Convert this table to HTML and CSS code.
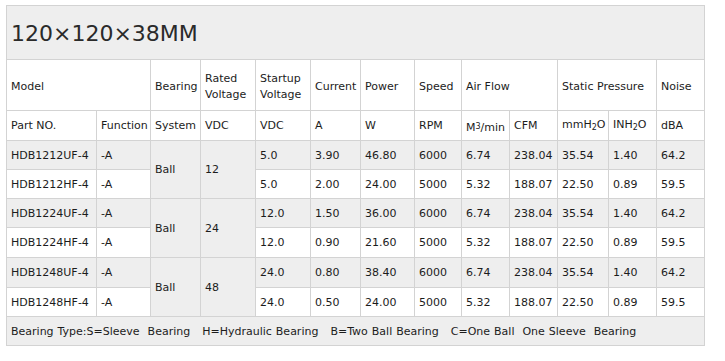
FILE: index.html
```html
<!DOCTYPE html>
<html>
<head>
<meta charset="utf-8">
<link rel="stylesheet" href="styles.css">
</head>
<body>
<table class="spec">
  <colgroup>
    <col class="c90"><col class="c54"><col class="c50"><col class="c55"><col class="c55"><col class="c50"><col class="c54"><col class="c47"><col class="c48"><col class="c48"><col class="c51"><col class="c48"><col class="c48">
  </colgroup>
  <tr class="title-row"><td colspan="13" class="title">120×120×38MM</td></tr>
  <tr class="head1">
    <td colspan="2">Model</td>
    <td>Bearing</td>
    <td>Rated<br>Voltage</td>
    <td>Startup<br>Voltage</td>
    <td>Current</td>
    <td>Power</td>
    <td>Speed</td>
    <td colspan="2">Air Flow</td>
    <td colspan="2">Static Pressure</td>
    <td>Noise</td>
  </tr>
  <tr class="head2">
    <td>Part NO.</td><td>Function</td><td>System</td><td>VDC</td><td>VDC</td><td>A</td><td>W</td><td>RPM</td>
    <td class="lowered">M<sup>3</sup>/min</td><td>CFM</td><td class="raised">mmH<sub>2</sub>O</td><td class="raised">INH<sub>2</sub>O</td><td>dBA</td>
  </tr>
  <tr class="row odd">
    <td>HDB1212UF-4</td><td>-A</td><td rowspan="2" class="merged">Ball</td><td rowspan="2" class="merged">12</td>
    <td>5.0</td><td>3.90</td><td>46.80</td><td>6000</td><td>6.74</td><td>238.04</td><td>35.54</td><td>1.40</td><td>64.2</td>
  </tr>
  <tr class="row">
    <td>HDB1212HF-4</td><td>-A</td>
    <td>5.0</td><td>2.00</td><td>24.00</td><td>5000</td><td>5.32</td><td>188.07</td><td>22.50</td><td>0.89</td><td>59.5</td>
  </tr>
  <tr class="row odd">
    <td>HDB1224UF-4</td><td>-A</td><td rowspan="2" class="merged">Ball</td><td rowspan="2" class="merged">24</td>
    <td>12.0</td><td>1.50</td><td>36.00</td><td>6000</td><td>6.74</td><td>238.04</td><td>35.54</td><td>1.40</td><td>64.2</td>
  </tr>
  <tr class="row tall">
    <td>HDB1224HF-4</td><td>-A</td>
    <td>12.0</td><td>0.90</td><td>21.60</td><td>5000</td><td>5.32</td><td>188.07</td><td>22.50</td><td>0.89</td><td>59.5</td>
  </tr>
  <tr class="row odd tall">
    <td>HDB1248UF-4</td><td>-A</td><td rowspan="2" class="merged">Ball</td><td rowspan="2" class="merged">48</td>
    <td>24.0</td><td>0.80</td><td>38.40</td><td>6000</td><td>6.74</td><td>238.04</td><td>35.54</td><td>1.40</td><td>64.2</td>
  </tr>
  <tr class="row">
    <td>HDB1248HF-4</td><td>-A</td>
    <td>24.0</td><td>0.50</td><td>24.00</td><td>5000</td><td>5.32</td><td>188.07</td><td>22.50</td><td>0.89</td><td>59.5</td>
  </tr>
  <tr class="foot-row">
    <td colspan="13" class="foot">Bearing Type:S=Sleeve&nbsp; Bearing&nbsp; &nbsp;H=Hydraulic Bearing&nbsp; &nbsp;B=Two Ball Bearing&nbsp; &nbsp;C=One Ball&nbsp; One Sleeve&nbsp; Bearing</td>
  </tr>
</table>
</body>
</html>
```
FILE: styles.css
```css
html, body {
  margin: 0;
  padding: 0;
  background: #fff;
}
body {
  padding: 5px 0 0 6px;
  font-family: "DejaVu Sans", Verdana, sans-serif;
  font-size: 11px;
  color: #1c1c1c;
}
.spec {
  border-collapse: collapse;
  table-layout: fixed;
  width: 699px;
}
.c90 { width: 90px; }
.c54 { width: 54px; }
.c50 { width: 50px; }
.c55 { width: 55px; }
.c47 { width: 47px; }
.c48 { width: 48px; }
.c51 { width: 51px; }
.spec td {
  border: 1px solid #d3d3d3;
  padding: 1px 2px 0 4px;
  vertical-align: middle;
  white-space: nowrap;
  line-height: 16px;
}
.title-row { height: 54px; }
.spec .title {
  background: #eeeeee;
  font-size: 22px;
  line-height: 26px;
  color: #2a2a2a;
  padding-top: 3px;
}
.head1 { height: 51px; }
.spec .head1 td { padding-top: 3px; }
.head2 { height: 30px; }
.spec .lowered { padding-top: 4px; }
.spec .raised { padding-top: 0; padding-bottom: 2px; }
.row { height: 29px; }
.row.tall { height: 30px; }
.odd td, .merged {
  background: #eeeeee;
}
.foot-row { height: 29px; }
.spec .foot {
  background: #eeeeee;
  word-spacing: 0.5px;
}
sup, sub {
  font-size: 8px;
  line-height: 0;
}
sup { vertical-align: 2px; }
sub { vertical-align: -2px; }
```
